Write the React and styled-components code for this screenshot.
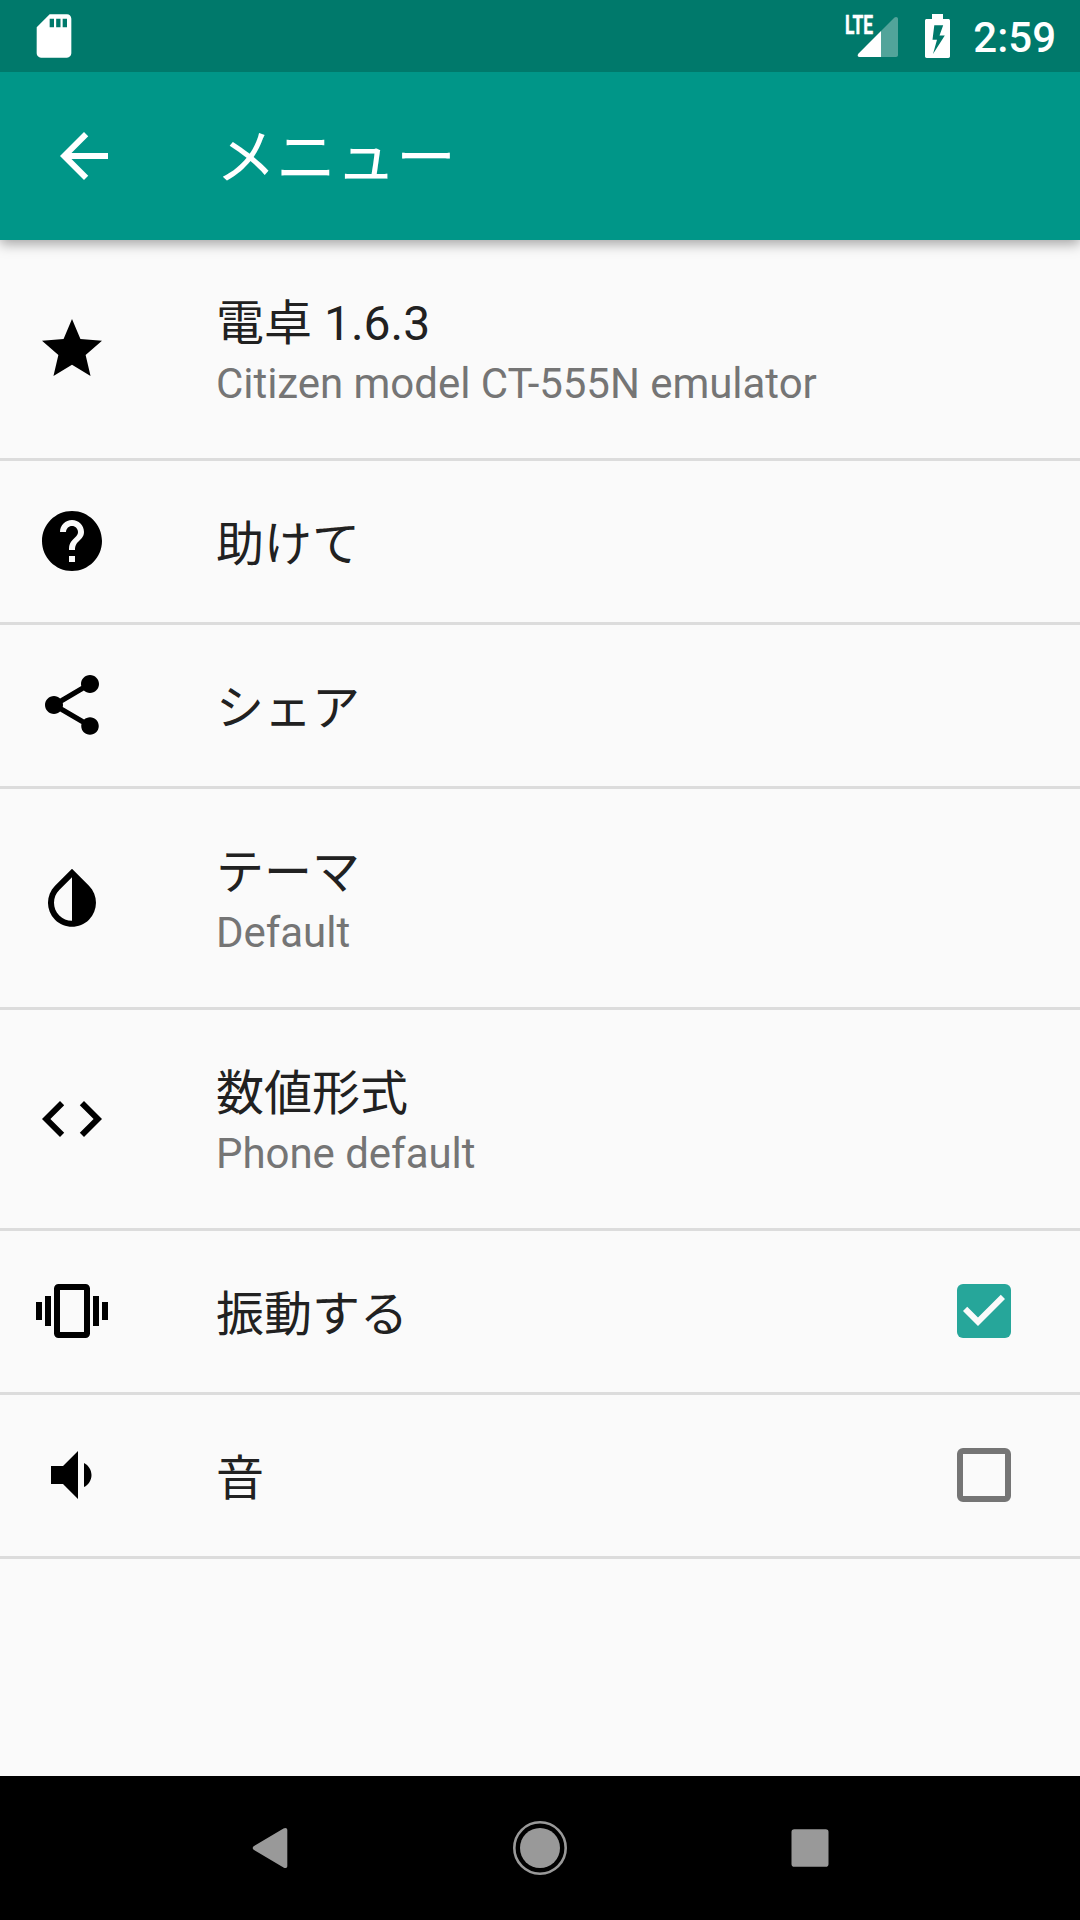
import React from "react";
import styled, { createGlobalStyle } from "styled-components";

const icons = {
  star: "M12 17.27L18.18 21l-1.64-7.03L22 9.24l-7.19-.61L12 2 9.19 8.63 2 9.24l5.46 4.73L5.82 21z",
  help: "M12 2C6.48 2 2 6.48 2 12s4.48 10 10 10 10-4.48 10-10S17.52 2 12 2zm1 17h-2v-2h2v2zm2.07-7.75l-.9.92C13.45 12.9 13 13.5 13 15h-2v-.5c0-1.1.45-2.1 1.17-2.83l1.24-1.26c.37-.36.59-.86.59-1.41 0-1.1-.9-2-2-2s-2 .9-2 2H8c0-2.21 1.79-4 4-4s4 1.79 4 4c0 .88-.36 1.68-.93 2.25z",
  share:
    "M18 16.08c-.76 0-1.44.3-1.96.77L8.91 12.7c.05-.23.09-.46.09-.7s-.04-.47-.09-.7l7.05-4.11c.54.5 1.25.81 2.04.81 1.66 0 3-1.34 3-3s-1.34-3-3-3-3 1.34-3 3c0 .24.04.47.09.7L8.04 9.81C7.5 9.31 6.79 9 6 9c-1.66 0-3 1.34-3 3s1.34 3 3 3c.79 0 1.5-.31 2.04-.81l7.12 4.16c-.05.21-.08.43-.08.65 0 1.61 1.31 2.92 2.92 2.92 1.61 0 2.92-1.31 2.92-2.92s-1.31-2.92-2.92-2.92z",
  theme:
    "M17.66 7.93L12 2.27 6.34 7.93c-3.12 3.12-3.12 8.19 0 11.31C7.9 20.8 9.95 21.58 12 21.58c2.05 0 4.1-.78 5.66-2.34 3.12-3.12 3.12-8.19 0-11.31zM12 19.59c-1.6 0-3.11-.62-4.24-1.76C6.62 16.69 6 15.19 6 13.59s.62-3.11 1.76-4.24L12 5.1v14.49z",
  code: "M9.4 16.6L4.8 12l4.6-4.6L8 6l-6 6 6 6 1.4-1.4zm5.2 0l4.6-4.6-4.6-4.6L16 6l6 6-6 6-1.4-1.4z",
  vibration:
    "M0 15h2V9H0v6zm3 2h2V7H3v10zm19-8v6h2V9h-2zm-3 8h2V7h-2v10zM16.5 3h-9C6.67 3 6 3.67 6 4.5v15c0 .83.67 1.5 1.5 1.5h9c.83 0 1.5-.67 1.5-1.5v-15c0-.83-.67-1.5-1.5-1.5zM16 19H8V5h8v14z",
  volume:
    "M18.5 12c0-1.77-1.02-3.29-2.5-4.03v8.05c1.48-.73 2.5-2.25 2.5-4.02zM5 9v6h4l5 5V4L9 9H5z",
  back: "M20 11H7.83l5.59-5.59L12 4l-8 8 8 8 1.41-1.41L7.83 13H20v-2z",
  sdCard:
    "M18 2h-8L4.02 8 4 20c0 1.1.9 2 2 2h12c1.1 0 2-.9 2-2V4c0-1.1-.9-2-2-2zm-6 6h-2V4h2v4zm3 0h-2V4h2v4zm3 0h-2V4h2v4z",
};

const items = [
  { icon: "star", title: "電卓 1.6.3", summary: "Citizen model CT-555N emulator" },
  { icon: "help", title: "助けて" },
  { icon: "share", title: "シェア" },
  { icon: "theme", title: "テーマ", summary: "Default" },
  { icon: "code", title: "数値形式", summary: "Phone default" },
  { icon: "vibration", title: "振動する", checked: true },
  { icon: "volume", title: "音", checked: false },
];

function Icon({ name, size = 72 }) {
  return (
    <Svg width={size} height={size} viewBox="0 0 24 24" fill="currentColor">
      <path d={icons[name]} />
    </Svg>
  );
}

function SignalIcon() {
  return (
    <Svg width="54" height="56" viewBox="0 -6 54 56" fill="#fff">
      <path
        d="M37 17L50.5 3.5C52 2.3 54 3 54 5v36c0 1.2-.8 2-2 2H37z"
        fillOpacity=".32"
      />
      <path d="M37 17L14.3 39.7c-1.3 1.5-.5 3.3 1.2 3.3H37z" />
      <LteText x="1" y="20" textLength="28" lengthAdjust="spacingAndGlyphs">
        LTE
      </LteText>
    </Svg>
  );
}

function BatteryIcon() {
  return (
    <Svg width="25" height="44" viewBox="0 0 25 44" fill="#fff">
      <path
        fillRule="evenodd"
        d="M7 0h11v5h5.3c1 0 1.7.7 1.7 1.7v35.6c0 1-.7 1.7-1.7 1.7H1.7C.7 44 0 43.3 0 42.3V6.7C0 5.7.7 5 1.7 5H7zM9.3 11.3L7.5 25.7H12L8 40l11.8-18.5h-5.3l3.7-10.2z"
      />
    </Svg>
  );
}

export default function App() {
  return (
    <>
      <GlobalStyle />
      <Screen>
        <StatusBar>
          <Icon name="sdCard" size={52} />
          <StatusRight>
            <SignalIcon />
            <BatteryIcon />
            <Clock>2:59</Clock>
          </StatusRight>
        </StatusBar>

        <AppBar>
          <Icon name="back" />
          <AppTitle>メニュー</AppTitle>
        </AppBar>

        <List>
          {items.map((item) => (
            <Row key={item.icon} $tall={Boolean(item.summary)}>
              <Icon name={item.icon} />
              <RowText $tall={Boolean(item.summary)}>
                <Title>{item.title}</Title>
                {item.summary && <Summary>{item.summary}</Summary>}
              </RowText>
              {item.checked !== undefined && (
                <Checkbox $checked={item.checked}>
                  {item.checked && (
                    <Svg width="54" height="54" viewBox="3 3 18 18" fill="#fafafa">
                      <path d="M10 17l-5-5 1.41-1.41L10 14.17l7.59-7.59L19 8z" />
                    </Svg>
                  )}
                </Checkbox>
              )}
            </Row>
          ))}
        </List>

        <NavBar>
          <Svg width="54" height="54" viewBox="0 0 54 54" fill="#999">
            <path d="M10.7 25.2L40.5 7.5c2-1.2 3.8-.4 3.8 1.6v35.8c0 2-1.8 2.8-3.8 1.6L10.7 28.8c-1.3-1-1.3-2.6 0-3.6z" />
          </Svg>
          <Svg width="54" height="54" viewBox="0 0 54 54">
            <circle cx="27" cy="27" r="25.7" fill="none" stroke="#999" strokeWidth="2.6" />
            <circle cx="27" cy="27" r="20" fill="#999" />
          </Svg>
          <Svg width="54" height="54" viewBox="0 0 54 54" fill="#999">
            <rect x="8.5" y="8.3" width="37" height="37.4" rx="2.8" />
          </Svg>
        </NavBar>
      </Screen>
    </>
  );
}

const GlobalStyle = createGlobalStyle`
  * {
    box-sizing: border-box;
  }

  body {
    margin: 0;
    background: #fafafa;
    font-family: Roboto, "Noto Sans CJK JP", sans-serif;
  }
`;

const Screen = styled.div`
  display: flex;
  flex-direction: column;
  width: 1080px;
  height: 1920px;
  overflow: hidden;
  background: #fafafa;
`;

const Svg = styled.svg`
  display: block;
  flex-shrink: 0;
`;

const StatusBar = styled.div`
  position: relative;
  z-index: 2;
  display: flex;
  justify-content: space-between;
  align-items: center;
  flex-shrink: 0;
  height: 72px;
  padding: 0 24px 0 28px;
  background: #00796b;
  color: #fff;
`;

const StatusRight = styled.div`
  display: flex;
  align-items: center;

  svg + svg {
    margin-left: 27px;
  }
`;

const LteText = styled.text`
  font-size: 26px;
  font-weight: 700;
  stroke: #fff;
  stroke-width: 0.5px;
`;

const Clock = styled.div`
  margin-left: 23px;
  padding-top: 3px;
  font-weight: 500;
  font-size: 42px;
  line-height: 50px;
`;

const AppBar = styled.header`
  position: relative;
  z-index: 1;
  display: flex;
  align-items: center;
  flex-shrink: 0;
  height: 168px;
  padding-left: 48px;
  background: #009688;
  color: #fff;
  box-shadow: 0 4px 12px rgba(0, 0, 0, 0.35);
`;

const AppTitle = styled.h1`
  margin: 0 0 0 96px;
  padding-top: 5px;
  font-weight: 400;
  font-size: 60px;
  line-height: 72px;
`;

const List = styled.main`
  flex: 1;
`;

const Row = styled.div`
  display: flex;
  align-items: center;
  height: ${(props) => (props.$tall ? 221 : 164)}px;
  padding: 0 69px ${(props) => (props.$tall ? 0 : 1)}px 36px;
  border-bottom: 3px solid #dcdcdc;
`;

const RowText = styled.div`
  flex: 1;
  margin-left: 108px;
  padding-top: ${(props) => (props.$tall ? 5 : 7)}px;
`;

const Title = styled.div`
  font-size: 48px;
  line-height: 60px;
  color: #212121;
`;

const Summary = styled.div`
  margin-top: 5px;
  font-size: 42px;
  line-height: 50px;
  letter-spacing: -0.04px;
  color: #757575;
`;

const Checkbox = styled.div`
  display: flex;
  align-items: center;
  justify-content: center;
  width: 54px;
  height: 54px;
  border: ${(props) => (props.$checked ? "none" : "6px solid #757575")};
  border-radius: 6px;
  background: ${(props) => (props.$checked ? "#26a69a" : "transparent")};
`;

const NavBar = styled.nav`
  display: flex;
  justify-content: center;
  align-items: center;
  gap: 216px;
  height: 144px;
  background: #000;
`;
